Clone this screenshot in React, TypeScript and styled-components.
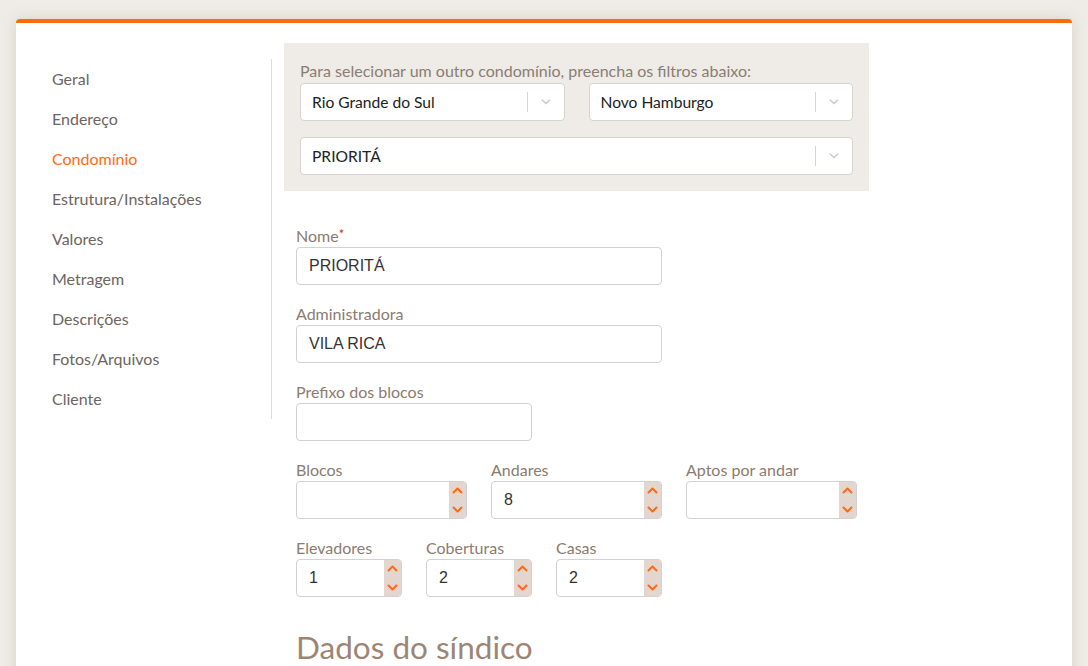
import React from "react";
import styled, { createGlobalStyle } from "styled-components";

const Global = createGlobalStyle`
  html, body { margin: 0; padding: 0; }
  body {
    background: #efebe6;
    font-family: Lato, "Noto Sans", sans-serif;
    overflow: hidden;
  }
`;

const Card = styled.div`
  margin: 19px 16px 0;
  background: #fff;
  border-top: 4px solid #ff6a0d;
  border-radius: 4px 4px 0 0;
  box-shadow: 0 0 14px rgba(120, 105, 90, 0.18);
  display: flex;
  align-items: flex-start;
  min-height: 660px;
`;

const Sidebar = styled.nav`
  width: 219px;
  margin-top: 36px;
  padding-left: 36px;
  border-right: 1px solid #dedbd8;
  display: flex;
  flex-direction: column;
`;

const NavItem = styled.a<{ $active?: boolean }>`
  display: block;
  height: 40px;
  line-height: 40px;
  font-size: 16px;
  color: ${(p) => (p.$active ? "#ff6a13" : "#6d6560")};
  text-decoration: none;
  cursor: pointer;
`;

const Main = styled.main`
  margin-left: 12px;
  margin-top: 20px;
  display: flex;
  flex-direction: column;
`;

const FilterBox = styled.section`
  width: 553px;
  background: #efebe6;
  padding: 18px 16px 16px;
  display: flex;
  flex-direction: column;
`;

const FilterLabel = styled.div`
  font-size: 16px;
  line-height: 20px;
  color: #8a7d74;
  margin-bottom: 2px;
  white-space: nowrap;
`;

const FilterRow = styled.div`
  display: flex;
  gap: 24px;
  & + & {
    margin-top: 16px;
  }
`;

const SelectBox = styled.div`
  flex: 1;
  height: 38px;
  box-sizing: border-box;
  background: #fff;
  border: 1px solid #d6d3d0;
  border-radius: 4px;
  display: flex;
  align-items: center;
`;

const SelectValue = styled.div`
  flex: 1;
  padding-left: 11px;
  font-size: 15.6px;
  color: #222;
`;

const SelectSep = styled.span`
  width: 1px;
  height: 20px;
  background: #d6d3d0;
`;

const SelectArrow = styled.span`
  width: 36px;
  display: flex;
  justify-content: center;
  align-items: center;
  color: #cdc9c6;
`;

const Form = styled.section`
  margin-top: 34px;
  padding-left: 12px;
  display: flex;
  flex-direction: column;
`;

const FieldRow = styled.div`
  display: flex;
  gap: 24px;
  margin-bottom: 18px;
`;

const Field = styled.div<{ $w: number }>`
  width: ${(p) => p.$w}px;
  display: flex;
  flex-direction: column;
`;

const Label = styled.label`
  font-size: 16px;
  line-height: 22px;
  color: #8c7b70;
  white-space: nowrap;
`;

const Req = styled.span`
  color: #e0261b;
  font-size: 13px;
  vertical-align: top;
  line-height: 18px;
`;

const TextInput = styled.div`
  height: 38px;
  box-sizing: border-box;
  border: 1px solid #d3d0d6;
  border-radius: 4px;
  padding-left: 12px;
  display: flex;
  align-items: center;
  font-family: "Liberation Sans", Arial, sans-serif;
  font-size: 16px;
  color: #333;
`;

const NumberInput = styled.div`
  height: 38px;
  box-sizing: border-box;
  border: 1px solid #d3d0d6;
  border-radius: 4px;
  display: flex;
  overflow: hidden;
`;

const NumberValue = styled.div`
  flex: 1;
  padding-left: 12px;
  display: flex;
  align-items: center;
  font-family: "Liberation Sans", Arial, sans-serif;
  font-size: 16px;
  color: #333;
`;

const Spinner = styled.div`
  width: 17px;
  background: #e2d6ce;
  display: flex;
  flex-direction: column;
  justify-content: center;
  align-items: center;
  gap: 12px;
`;

const Heading = styled.h2`
  margin: 14px 0 0;
  font-size: 31.5px;
  line-height: 36px;
  font-weight: 400;
  color: #9b8676;
`;

const Chevron = () => (
  <svg width="14" height="14" viewBox="0 0 20 20">
    <path
      d="M4.5 7.2 10 12.3l5.5-5.1"
      fill="none"
      stroke="currentColor"
      strokeWidth="2"
      strokeLinecap="round"
    />
  </svg>
);

const Caret = ({ up }: { up?: boolean }) => (
  <svg width="11" height="7" viewBox="0 0 11 7">
    <path
      d={up ? "M1.5 5.5 5.5 1.5 9.5 5.5" : "M1.5 1.5 5.5 5.5 9.5 1.5"}
      fill="none"
      stroke="#ff6a13"
      strokeWidth="2"
      strokeLinecap="round"
      strokeLinejoin="round"
    />
  </svg>
);

const Select = ({ value }: { value: string }) => (
  <SelectBox>
    <SelectValue>{value}</SelectValue>
    <SelectSep />
    <SelectArrow>
      <Chevron />
    </SelectArrow>
  </SelectBox>
);

const Num = ({ label, value, w }: { label: string; value?: string; w: number }) => (
  <Field $w={w}>
    <Label>{label}</Label>
    <NumberInput>
      <NumberValue>{value}</NumberValue>
      <Spinner>
        <Caret up />
        <Caret />
      </Spinner>
    </NumberInput>
  </Field>
);

const nav = [
  "Geral",
  "Endereço",
  "Condomínio",
  "Estrutura/Instalações",
  "Valores",
  "Metragem",
  "Descrições",
  "Fotos/Arquivos",
  "Cliente",
];

export default function App() {
  return (
    <>
      <Global />
      <Card>
        <Sidebar>
          {nav.map((n) => (
            <NavItem key={n} $active={n === "Condomínio"}>
              {n}
            </NavItem>
          ))}
        </Sidebar>
        <Main>
          <FilterBox>
            <FilterLabel>Para selecionar um outro condomínio, preencha os filtros abaixo:</FilterLabel>
            <FilterRow>
              <Select value="Rio Grande do Sul" />
              <Select value="Novo Hamburgo" />
            </FilterRow>
            <FilterRow>
              <Select value="PRIORITÁ" />
            </FilterRow>
          </FilterBox>
          <Form>
            <FieldRow>
              <Field $w={366}>
                <Label>
                  Nome<Req>*</Req>
                </Label>
                <TextInput>PRIORITÁ</TextInput>
              </Field>
            </FieldRow>
            <FieldRow>
              <Field $w={366}>
                <Label>Administradora</Label>
                <TextInput>VILA RICA</TextInput>
              </Field>
            </FieldRow>
            <FieldRow>
              <Field $w={236}>
                <Label>Prefixo dos blocos</Label>
                <TextInput />
              </Field>
            </FieldRow>
            <FieldRow>
              <Num label="Blocos" w={171} />
              <Num label="Andares" value="8" w={171} />
              <Num label="Aptos por andar" w={171} />
            </FieldRow>
            <FieldRow>
              <Num label="Elevadores" value="1" w={106} />
              <Num label="Coberturas" value="2" w={106} />
              <Num label="Casas" value="2" w={106} />
            </FieldRow>
            <Heading>Dados do síndico</Heading>
          </Form>
        </Main>
      </Card>
    </>
  );
}
